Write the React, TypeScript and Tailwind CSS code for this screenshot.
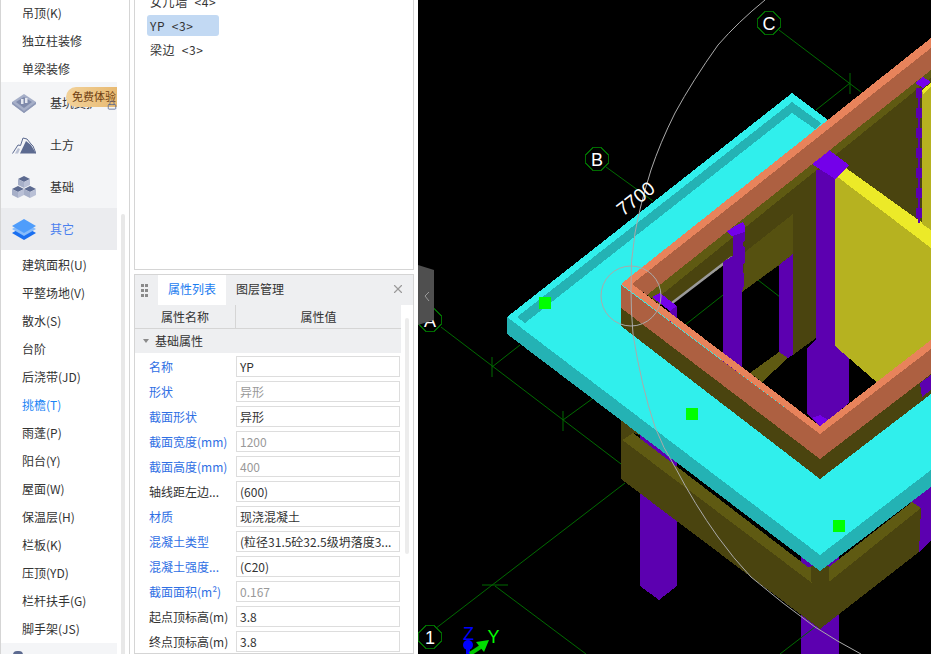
import { Lock, X } from "lucide-react";

const topItems = ["吊顶(K)", "独立柱装修", "单梁装修"];

const bottomItems = [
  "建筑面积(U)",
  "平整场地(V)",
  "散水(S)",
  "台阶",
  "后浇带(JD)",
  "挑檐(T)",
  "雨蓬(P)",
  "阳台(Y)",
  "屋面(W)",
  "保温层(H)",
  "栏板(K)",
  "压顶(YD)",
  "栏杆扶手(G)",
  "脚手架(JS)",
];

const props = [
  { label: "名称", value: "YP", blue: true },
  { label: "形状", value: "异形", blue: true, off: true },
  { label: "截面形状", value: "异形", blue: true },
  { label: "截面宽度(mm)", value: "1200", blue: true, off: true },
  { label: "截面高度(mm)", value: "400", blue: true, off: true },
  { label: "轴线距左边...", value: "(600)" },
  { label: "材质", value: "现浇混凝土", blue: true },
  { label: "混凝土类型", value: "(粒径31.5砼32.5级坍落度3...", blue: true },
  { label: "混凝土强度...", value: "(C20)", blue: true },
  { label: "截面面积(m²)", value: "0.167", blue: true, off: true },
  { label: "起点顶标高(m)", value: "3.8" },
  { label: "终点顶标高(m)", value: "3.8" },
];

function PitIcon() {
  return (
    <svg width="24" height="19" viewBox="0 0 24 19">
      <path d="M12 0 24 8 24 10 12 19 0 10 0 8Z" fill="#a6afc8" />
      <path d="M12 3 20 8 12 14 4 8Z" fill="#7f8aab" />
      <path d="M9 5h2.5v5H9zM13 4h2.5v5H13z" fill="#e4e7ef" />
      <path d="M0 8 12 17 24 8 24 10 12 19 0 10Z" fill="#8e98b6" />
    </svg>
  );
}

function MountainIcon() {
  return (
    <svg width="24" height="17" viewBox="0 0 24 17">
      <path d="M8 16.5 14 4 19 8 24 16.5Z" fill="#5c6a90" />
      <path d="M0.5 16.5 6 8 8.5 8.5 11 1 15 2 19 7 21 9 24 16.5" fill="none" stroke="#5c6a90" strokeWidth="1" />
      <path d="M3 16.5 6 11 8 12 6 16.5Z" fill="#b9c0d4" />
    </svg>
  );
}

function CubesIcon() {
  const cube = (x: number, y: number) => (
    <g transform={`translate(${x} ${y})`}>
      <path d="M6 0 12 3 6 6 0 3Z" fill="#5c6a90" />
      <path d="M0 3 6 6 6 12 0 9Z" fill="#a6afc8" />
      <path d="M12 3 6 6 6 12 12 9Z" fill="#b9c0d6" />
    </g>
  );
  return (
    <svg width="24" height="23" viewBox="0 0 24 23">
      {cube(6, 0)}
      {cube(0, 10)}
      {cube(12, 10)}
    </svg>
  );
}

function LayersIcon() {
  return (
    <svg width="24" height="21" viewBox="0 0 24 21">
      <path d="M0 14 12 7 24 14 12 21Z" fill="#1a6ff0" />
      <path d="M0 10 12 3 24 10 12 17Z" fill="#86bbfb" />
      <path d="M0 7 12 0 24 7 12 14Z" fill="#4f9dfb" />
    </svg>
  );
}

function Category({ icon, label, active }: { icon: React.ReactNode; label: string; active?: boolean }) {
  return (
    <div className={`flex h-[42px] items-center gap-[14px] pl-[11px] ${active ? "bg-[#ebecef] text-[#4a80ee]" : "text-[#333]"}`}>
      <div className="flex w-6 justify-center">{icon}</div>
      <span>{label}</span>
    </div>
  );
}

function Sidebar() {
  return (
    <div className="flex w-[129px] shrink-0 border-l border-[#d5d5d5]">
      <div className="relative w-[116px] shrink-0">
        <div className="-mt-px">
          {topItems.map((t) => (
            <div key={t} className="flex h-7 items-center pl-[21px] text-[#333]">
              {t}
            </div>
          ))}
        </div>
        <div className="-mt-px bg-[#f4f5f7]">
          <Category icon={<PitIcon />} label="基坑支护" />
          <Category icon={<MountainIcon />} label="土方" />
          <Category icon={<CubesIcon />} label="基础" />
          <Category icon={<LayersIcon />} label="其它" active />
        </div>
        <div className="mt-px">
          {bottomItems.map((t) => (
            <div key={t} className={`flex h-7 items-center pl-[21px] ${t === "挑檐(T)" ? "text-[#1a84f5]" : "text-[#333]"}`}>
              {t}
            </div>
          ))}
        </div>
        <div className="h-4 bg-[#f4f5f7] pl-3 pt-2">
          <div className="h-2 w-[10px] rounded-t bg-[#5c6a90]" />
        </div>
        {/* trial badge over the first category */}
        <div className="absolute left-[65px] top-[87px] flex h-5 w-[51px] items-center overflow-hidden rounded-l-full bg-gradient-to-r from-[#f2d29a] to-[#e8ba72] pb-0.5 pl-[6px] text-[11px] text-[#6e3d10]">
          <span className="whitespace-nowrap">免费体验</span>
        </div>
        <Lock className="absolute left-[106px] top-[100px] text-[#5c6a90]" size={10} />
      </div>
      <div className="flex-1 pl-1">
        <div className="mt-[214px] h-[440px] w-1 rounded-t-sm bg-[#e8e8e8]" />
      </div>
    </div>
  );
}

function PropRow({ label, value, blue, off }: { label: string; value: string; blue?: boolean; off?: boolean }) {
  return (
    <div className="flex h-[25px] items-center">
      <div className={`w-[101px] shrink-0 pl-[14px] whitespace-nowrap ${blue ? "text-[#2f6fe4]" : "text-[#333]"}`}>{label}</div>
      <div className={`flex h-[21px] w-[164px] items-center border border-[#dddddd] pl-[3px] whitespace-nowrap ${off ? "text-[#999]" : "text-[#333]"}`}>
        {value}
      </div>
    </div>
  );
}

function Panels() {
  return (
    <div className="flex w-[289px] shrink-0 flex-col border-l border-[#d5d5d5] pr-1 pl-1">
      <div className="h-[270px] shrink-0 overflow-hidden border-x border-b border-[#d5d5d5] pl-3 tracking-[0.6px] text-[#333]">
        <div className="-mt-[9px] w-[72px]">
          <div className="flex h-[21px] items-center whitespace-pre pl-[3px]">女儿墙  &lt;4&gt;</div>
          <div className="mt-[3px] flex h-[21px] items-center whitespace-pre rounded-[3px] bg-[#c2d9f3] pl-[3px]">YP  &lt;3&gt;</div>
          <div className="mt-[3px] flex h-[21px] items-center whitespace-pre pl-[3px]">梁边  &lt;3&gt;</div>
        </div>
      </div>
      <div className="mt-1 min-h-0 flex-1 overflow-hidden border border-[#d5d5d5]">
        <div className="flex h-[30px] items-center bg-[#eeeff1] text-[#333]">
          <div className="grid w-[23px] grid-cols-[3px_3px] gap-x-px gap-y-[2px] pl-[6px]">
            {[0, 1, 2, 3, 4, 5].map((i) => (
              <span key={i} className="h-[3px] w-[3px] bg-[#8a8a8a]" />
            ))}
          </div>
          <div className="flex h-full w-[68px] items-center justify-center bg-white pb-0.5 text-[#1a7cf0]">属性列表</div>
          <div className="ml-[10px] pb-0.5">图层管理</div>
          <X className="mb-0.5 ml-auto mr-[8px] text-[#9a9a9a]" size={14} />
        </div>
        <div className="flex">
          <div className="w-[266px] shrink-0">
            <div className="flex h-6 border-b border-[#d5d5d5] bg-[#eeeff1] text-[#333]">
              <div className="flex w-[101px] items-center justify-center border-r border-[#d5d5d5]">属性名称</div>
              <div className="flex flex-1 items-center justify-center">属性值</div>
            </div>
            <div className="flex h-6 items-center bg-[#eeeff1] pl-[8px] text-[#333]">
              <span className="h-0 w-0 border-x-[3.5px] border-t-[4px] border-x-transparent border-t-[#8a8a8a]" />
              <span className="ml-[6px]">基础属性</span>
            </div>
            <div className="pt-[1px]">
              {props.map((p) => (
                <PropRow key={p.label} {...p} />
              ))}
            </div>
          </div>
          <div className="flex-1 pl-1">
            <div className="mt-[13px] h-[236px] w-1 rounded-sm bg-[#ececec]" />
          </div>
        </div>
      </div>
    </div>
  );
}

function AxisMark({ x, y, label }: { x: number; y: number; label: string }) {
  const r = 12;
  const pts = Array.from({ length: 8 }, (_, i) => {
    const a = (Math.PI / 4) * i + Math.PI / 8;
    return `${x + r * Math.cos(a)},${y + r * Math.sin(a)}`;
  }).join(" ");
  return (
    <g>
      <polygon points={pts} fill="#000" stroke="#006b00" strokeWidth="1" />
      <text x={x} y={y + 7} textAnchor="middle" fill="#fff" fontSize="18" fontFamily="Liberation Sans, sans-serif">
        {label}
      </text>
    </g>
  );
}

const C = {
  cyan: "#30efec",
  cyanDark: "#24b2b4",
  orange: "#e8835b",
  orangeDark: "#ad6041",
  olive: "#4a440f",
  oliveMid: "#565110",
  oliveLight: "#5f5a12",
  purple: "#5c00b0",
  purpleTop: "#7400ea",
  yellow: "#b6b220",
  yellowTop: "#ecea28",
  grid: "#006b00",
};

function Canvas() {
  const lines = [
    [606, 167, 653, 201],
    [779, 30, 861, 92],
    [850, 83, 816, 110],
    [441, 327, 625, 467],
    [492, 367, 520, 345],
    [563, 420, 592, 399],
    [431, 632, 625, 483],
    [482, 585, 508, 585],
    [495, 586, 586, 654],
    [850, 73, 850, 94],
    [492, 357, 492, 377],
    [563, 411, 563, 431],
  ];
  return (
    <div className="relative h-full flex-1 overflow-hidden bg-black">
      <svg className="block" width="513" height="654" viewBox="418 0 513 654" shapeRendering="crispEdges">
        {lines.map((l, i) => (
          <line key={i} x1={l[0]} y1={l[1]} x2={l[2]} y2={l[3]} stroke={C.grid} strokeWidth="1" shapeRendering="auto" />
        ))}
        {/* columns behind the lower beam */}
        <polygon points="640,430 677,430 677,586 659,600 640,586" fill={C.purple} />
        <rect x="801" y="550" width="38" height="104" fill={C.purple} />
        <polygon points="910,495 931,478 931,540 919,552 910,552" fill={C.purple} />
        {/* lower beam */}
        <polygon points="621,439 820,589 921,508 919,552 820,629 621,479" fill={C.olive} />
        <polygon points="621,439 633,433 808,567 829,567 912,502 921,508 820,589" fill={C.oliveLight} />
        <polygon points="621,419 642,436 633,433 621,441" fill={C.olive} />
        <polygon points="811,566 829,566 829,582 820,589 811,582" fill={C.olive} />
        <line x1="815" y1="627" x2="780" y2="654" stroke={C.grid} shapeRendering="auto" />
        {/* slab */}
        <polygon points="507,317 820,555 820,571 507,334" fill={C.cyanDark} />
        <polygon points="820,555 931,470 931,487 820,571" fill={C.cyanDark} />
        <polygon points="507,317 792,93 832,123 640,290 931,300 931,470 820,555" fill={C.cyan} />
        <polygon points="517,317 792,102 821,123 815,129 792,113 525,323" fill={C.cyanDark} />
        {/* opening inside the parapet */}
        <polygon points="632,284 931,48 931,340 820,427" fill="#000" />
        <line x1="758" y1="280" x2="780" y2="297" stroke={C.grid} shapeRendering="auto" />
        <line x1="723" y1="295" x2="685" y2="325" stroke={C.grid} shapeRendering="auto" />
        {/* back walls */}
        <polygon points="647,295 735,226 735,257 672,303 660,305" fill={C.olive} />
        <polygon points="742,220 931,70 931,240 816,338 793,355 793,255 742,292" fill={C.olive} />
        <polygon points="745,252 793,214 793,254 742,292" fill={C.oliveMid} />
        <polygon points="647,295 931,70 931,78 655,300" fill={C.oliveLight} />
        <line x1="672" y1="303" x2="732" y2="257" stroke="#9a9a9a" strokeWidth="2.5" shapeRendering="auto" />
        <polygon points="750,373 779,352 788,358 762,382" fill={C.oliveLight} />
        {/* columns in the opening */}
        <polygon points="652,297 660,293 677,306 670,311" fill={C.purpleTop} />
        <polygon points="670,311 677,306 677,320 668,324" fill={C.purple} />
        <polygon points="733,236 745,230 745,240 743,243 743,246 745,248 745,262 743,265 743,270 744,275 744,285 742,292 742,372 723,372 723,262 733,256" fill={C.purple} />
        <polygon points="726,231 743,222 745,226 745,232 732,236" fill={C.purpleTop} />
        <polygon points="779,265 793,254 793,355 788,358 779,352" fill={C.purple} />
        <rect x="816" y="170" width="19" height="180" fill={C.purple} />
        <polygon points="807,348 816,340 835,346 849,356 849,403 820,427 807,413" fill={C.purple} />
        <polygon points="812,418 820,415 828,420 820,426" fill={C.purpleTop} />
        {/* yellow walls */}
        <polygon points="835,175 931,248 931,345 880,385 835,346" fill={C.yellow} />
        <polygon points="835,175 846,168 931,229 931,248" fill={C.yellowTop} />
        <polygon points="812,164 829,150 849,165 835,179" fill={C.purpleTop} />
        <polygon points="922,92 931,86 931,230 922,224" fill={C.yellow} />
        <polygon points="922,90 931,83 931,87 923,94" fill={C.yellowTop} />
        <rect x="918" y="88" width="2" height="135" fill={C.purple} />
        {[88, 108, 128, 148, 168, 188, 208].map((y) => (
          <rect key={y} x="916" y={y} width="6" height="10" fill={C.purple} />
        ))}
        <polygon points="915,83 923,77 931,82 923,88" fill={C.purpleTop} />
        {/* parapet */}
        <polygon points="632,284 931,48 931,70 647,295" fill={C.orangeDark} />
        <polygon points="621,308 820,459 931,374 931,394 820,479 621,326" fill={C.olive} />
        <polygon points="920,383 931,375 931,390 922,397" fill={C.purple} />
        <polygon points="621,285 820,434 820,459 621,308" fill={C.orangeDark} />
        <polygon points="820,434 931,349 931,374 820,459" fill={C.orangeDark} />
        <polygon points="621,284 931,38 931,48 632,284 820,426 931,340 931,349 820,434" fill={C.orange} />
        {/* markers */}
        <rect x="539" y="297" width="12" height="12" fill="#00ff00" />
        <rect x="686" y="408" width="12" height="12" fill="#00ff00" />
        <rect x="833" y="520" width="12" height="12" fill="#00ff00" />
        {/* snap circle and arc */}
        <circle cx="631" cy="296" r="30" fill="none" stroke="#aaaaaa" strokeWidth="1" shapeRendering="auto" />
        <path
          d="M765 0 Q738 22 718 45 Q693 80 675 113 Q660 143 651 170 Q640 205 635 233 Q630 262 631 290 Q631 312 633 334 Q641 385 655 427 Q663 448 675 467 Q695 505 718 537 Q733 558 751 577 Q783 604 815 627 Q838 642 861 654"
          fill="none"
          stroke="#aaaaaa"
          strokeWidth="1"
          shapeRendering="auto"
        />
        <text x="636" y="205" transform="rotate(-38 636 199)" textAnchor="middle" fill="#fff" fontSize="19" fontFamily="Liberation Sans, sans-serif">
          7700
        </text>
        <AxisMark x={597} y={159} label="B" />
        <AxisMark x={769} y={23} label="C" />
        <AxisMark x={430} y={320} label="A" />
        <AxisMark x={430} y={637} label="1" />
        {/* axes gizmo */}
        <text x="468.5" y="640" textAnchor="middle" fill="#0000ff" fontSize="18" fontFamily="Liberation Sans, sans-serif">
          Z
        </text>
        <text x="493.5" y="643" textAnchor="middle" fill="#00ff00" fontSize="18" fontFamily="Liberation Sans, sans-serif">
          Y
        </text>
        <rect x="466" y="648" width="4" height="6" fill="#0000ff" />
        <circle cx="468" cy="645" r="5" fill="#0000ff" shapeRendering="auto" />
        <line x1="470" y1="654" x2="482" y2="646" stroke="#00c800" strokeWidth="4" shapeRendering="auto" />
        <polygon points="489,640 484,652 476,642" fill="#00e000" shapeRendering="auto" />
        {/* panel collapse handle */}
        <polygon points="418,265 434,270 434,320 418,325" fill="#4f4f4f" shapeRendering="auto" />
        <path d="M429 292 425 296 429 301" fill="none" stroke="#9a9a9a" strokeWidth="1" shapeRendering="auto" />
      </svg>
    </div>
  );
}

export default function App() {
  return (
    <div className="flex h-[654px] w-[931px] overflow-hidden bg-white font-['Noto_Sans_CJK_SC',sans-serif] text-[12px] leading-none">
      <Sidebar />
      <Panels />
      <Canvas />
    </div>
  );
}
